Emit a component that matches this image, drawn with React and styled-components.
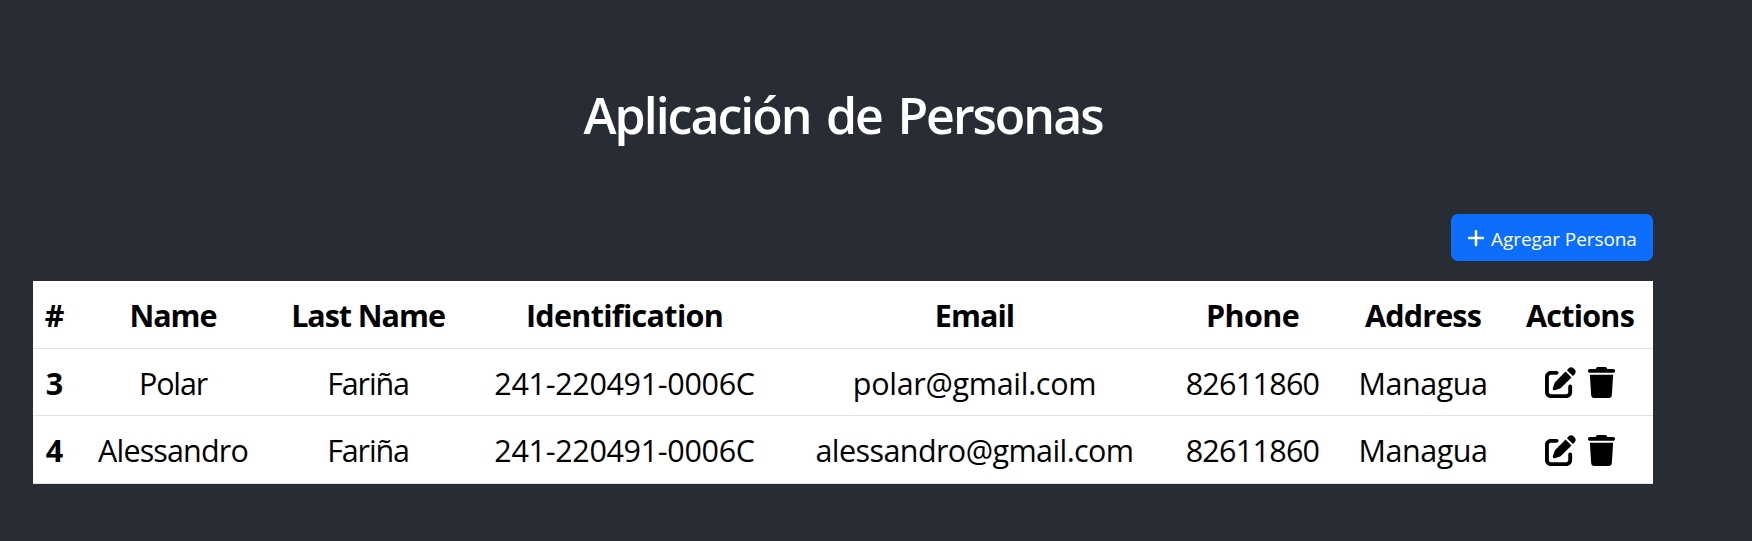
import React from "react";
import styled, { createGlobalStyle } from "styled-components";
import { FaPenToSquare, FaPlus, FaTrash } from "react-icons/fa6";

const GlobalStyle = createGlobalStyle`
  *, *::before, *::after { box-sizing: border-box; }
  body {
    margin: 0;
    background: #282c34;
    font-family: "Open Sans", "Noto Sans", sans-serif;
  }
`;

const Page = styled.main`
  min-height: 541px;
  padding: 77px 99px 0 33px;
  background: #282c34;
`;

const Title = styled.h1`
  margin: 0;
  height: 77px;
  color: #fff;
  font-size: 50px;
  font-weight: 620;
  line-height: 76px;
  letter-spacing: -2px;
  word-spacing: 4.5px;
  text-align: center;
`;

const Toolbar = styled.div`
  display: flex;
  justify-content: flex-end;
  padding: 60px 0 20px;
`;

const AddButton = styled.button`
  display: flex;
  align-items: center;
  gap: 5px;
  width: 202px;
  height: 47px;
  padding: 0 15px;
  border: 0;
  border-radius: 7px;
  background: #0d6efd;
  color: #fff;
  font-family: inherit;
  font-size: 19px;
  line-height: 28px;
  letter-spacing: -0.07px;
  white-space: nowrap;
  cursor: pointer;

  svg {
    flex: none;
    width: 20px;
    height: 20px;
  }
`;

const ButtonLabel = styled.span`
  padding-top: 2px;
`;

const Table = styled.table`
  width: 100%;
  table-layout: fixed;
  border-collapse: separate;
  border-spacing: 0;
  background: #fff;
  color: #000;
  font-size: 30.5px;
  line-height: 46px;
  text-align: center;
`;

const Column = styled.col`
  width: ${(p) => p.$width}px;
`;

const Row = styled.tr`
  height: ${(p) => p.$height}px;
`;

const Cell = styled.td`
  padding: 1px 0 0;
  border-bottom: 1px solid #dee2e6;
  font-weight: ${(p) => (p.$bold ? 700 : 400)};
  letter-spacing: ${(p) => p.$track || 0}px;
  white-space: nowrap;
`;

const Actions = styled.div`
  display: flex;
  justify-content: center;
  gap: 10px;
  padding-left: 2px;

  svg {
    width: 31px;
    height: 31px;
  }
`;

const columns = [
  { label: "#", width: 43 },
  { label: "Name", width: 194, track: -1.05 },
  { label: "Last Name", width: 196, track: -1.05 },
  { label: "Identification", width: 317, track: -0.68 },
  { label: "Email", width: 383, track: -0.95 },
  { label: "Phone", width: 173, track: -0.6 },
  { label: "Address", width: 168, track: -0.83 },
  { label: "Actions", width: 146, track: -0.75 },
];

const people = [
  {
    id: 3,
    height: 67,
    cells: [
      ["Polar", -1.15],
      ["Fariña", -1.18],
      ["241-220491-0006C", -0.33],
      ["polar@gmail.com", -0.3],
      ["82611860", -0.73],
      ["Managua", -0.45],
    ],
  },
  {
    id: 4,
    height: 68,
    cells: [
      ["Alessandro", -0.85],
      ["Fariña", -1.18],
      ["241-220491-0006C", -0.33],
      ["alessandro@gmail.com", -0.58],
      ["82611860", -0.73],
      ["Managua", -0.45],
    ],
  },
];

export default function App() {
  return (
    <Page>
      <GlobalStyle />
      <Title>Aplicación de Personas</Title>
      <Toolbar>
        <AddButton type="button">
          <FaPlus />
          <ButtonLabel>Agregar Persona</ButtonLabel>
        </AddButton>
      </Toolbar>
      <Table>
        <colgroup>
          {columns.map((c) => (
            <Column key={c.label} $width={c.width} />
          ))}
        </colgroup>
        <thead>
          <Row $height={68}>
            {columns.map((c) => (
              <Cell as="th" key={c.label} $bold $track={c.track}>
                {c.label}
              </Cell>
            ))}
          </Row>
        </thead>
        <tbody>
          {people.map((person) => (
            <Row key={person.id} $height={person.height}>
              <Cell as="th" $bold>
                {person.id}
              </Cell>
              {person.cells.map(([text, track], i) => (
                <Cell key={i} $track={track}>
                  {text}
                </Cell>
              ))}
              <Cell>
                <Actions>
                  <FaPenToSquare />
                  <FaTrash />
                </Actions>
              </Cell>
            </Row>
          ))}
        </tbody>
      </Table>
    </Page>
  );
}
